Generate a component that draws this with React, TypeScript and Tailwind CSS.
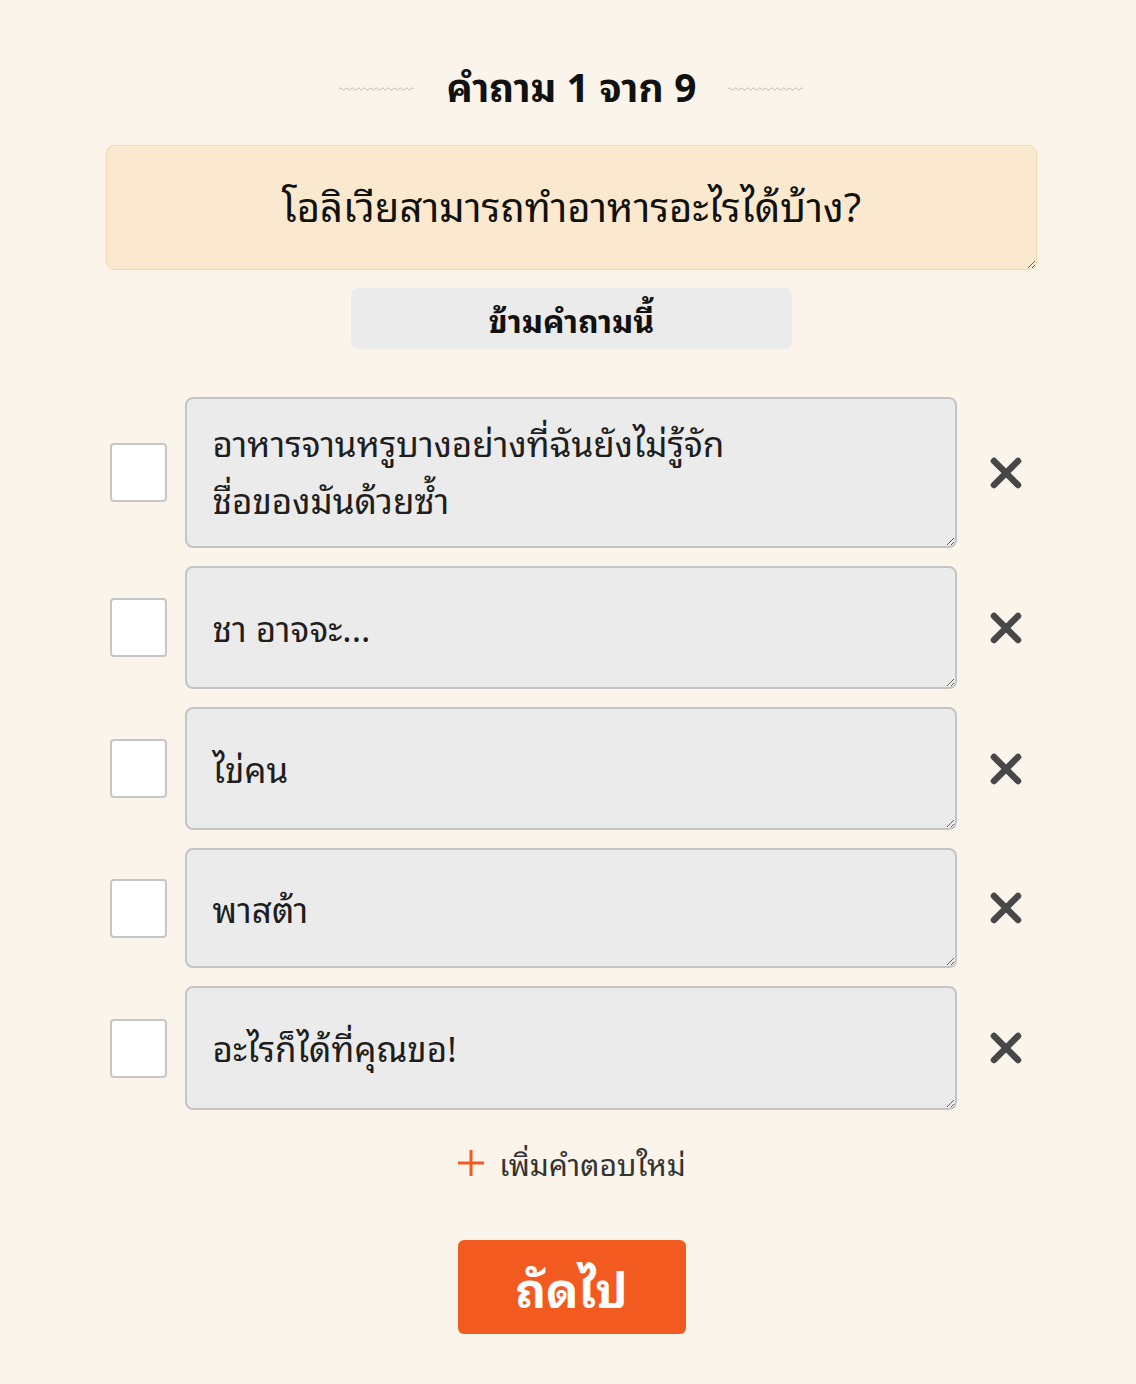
import React from "react";

const answers = [
  { text: "อาหารจานหรูบางอย่างที่ฉันยังไม่รู้จัก\nชื่อของมันด้วยซ้ำ", box: "h-[151px] pt-[14px]" },
  { text: "ชา อาจจะ...", box: "h-[123px] pt-[30px]" },
  { text: "ไข่คน", box: "h-[123px] pt-[30px]" },
  { text: "พาสต้า", box: "h-[120px] pt-[29px]" },
  { text: "อะไรก็ได้ที่คุณขอ!", box: "h-[124px] pt-[30px]" },
];

function Wave() {
  return (
    <svg width="76" height="6" viewBox="0 0 76 6" className="block mt-[9px]">
      <path
        d="M0 3 q1.5 -2.5 3 0 t3 0 t3 0 t3 0 t3 0 t3 0 t3 0 t3 0 t3 0 t3 0 t3 0 t3 0 t3 0 t3 0 t3 0 t3 0 t3 0 t3 0 t3 0 t3 0 t3 0 t3 0 t3 0 t3 0 t3 0"
        fill="none"
        stroke="#b4aea5"
        strokeWidth="0.8"
      />
    </svg>
  );
}

function XIcon() {
  return (
    <svg width="34" height="34" viewBox="0 0 34 34" className="block">
      <path d="M5 5 L29 29 M29 5 L5 29" stroke="#474747" strokeWidth="6.5" strokeLinecap="round" />
    </svg>
  );
}

export default function App() {
  return (
    <div className="min-h-[1384px] w-full bg-[#faf4ea] text-[#111] font-['Noto_Sans_Thai_Looped','Noto_Sans_Thai',sans-serif]">
      <div className="flex flex-col items-center pt-[54px] pl-[7px]">
        <div className="flex items-center gap-[31px] h-[60px]">
          <Wave />
          <h1 className="text-[39px] font-bold leading-none">คำถาม 1 จาก 9</h1>
          <Wave />
        </div>

        <textarea
          className="mt-[31px] w-[931px] h-[125px] rounded-[8px] border border-[#f3d8b0] bg-[#fbe9cf] text-center text-[40px] text-[#111] pt-[30px] px-6 outline-none leading-[1.4] font-['Noto_Sans_Thai_Looped','Noto_Sans_Thai',sans-serif]"
          defaultValue="โอลิเวียสามารถทำอาหารอะไรได้บ้าง?"
        />

        <button className="mt-[18px] w-[441px] h-[61px] rounded-[8px] bg-[#ebebeb] text-[32px] leading-none font-bold text-[#111]">
          ข้ามคำถามนี้
        </button>

        <div className="mt-[48px] flex flex-col gap-[18px] mr-[11px]">
          {answers.map((a, i) => (
            <div key={i} className="flex items-center">
              <div className="w-[57px] h-[59px] rounded-[4px] border-2 border-[#c6c6c6] bg-white" />
              <textarea
                className={`ml-[18px] w-[772px] ${a.box} block rounded-[8px] border-2 border-[#c4c4c4] bg-[#ebebeb] text-[35px] leading-[57px] text-[#1e1e1e] px-[26px] outline-none font-['Noto_Sans_Thai_Looped','Noto_Sans_Thai',sans-serif]`}
                defaultValue={a.text}
              />
              <div className="ml-[32px]">
                <XIcon />
              </div>
            </div>
          ))}
        </div>

        <div className="mt-[38px] flex items-center gap-[14px] text-[30px] leading-none text-[#333]">
          <svg width="28" height="28" viewBox="0 0 28 28" className="block">
            <path d="M14 1 V27 M1 14 H27" stroke="#f15a22" strokeWidth="3" />
          </svg>
          <span>เพิ่มคำตอบใหม่</span>
        </div>

        <button className="mt-[62px] w-[228px] h-[94px] rounded-[6px] bg-[#f25a1f] text-white text-[48px] leading-none font-bold">
          ถัดไป
        </button>
      </div>
    </div>
  );
}
